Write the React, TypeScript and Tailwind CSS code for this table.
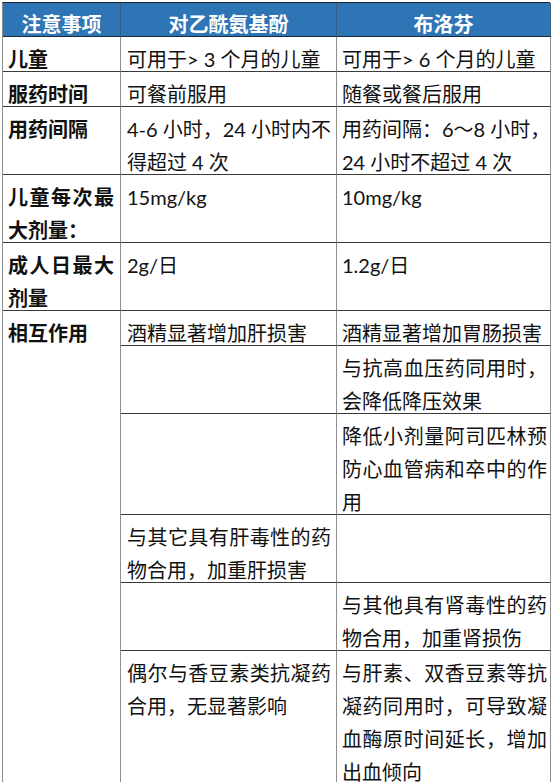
import React from "react";

type Row = {
  label: string[];
  a: string[];
  b: string[];
};

const rows: Row[] = [
  { label: ["儿童"], a: ["可用于> 3 个月的儿童"], b: ["可用于> 6 个月的儿童"] },
  { label: ["服药时间"], a: ["可餐前服用"], b: ["随餐或餐后服用"] },
  {
    label: ["用药间隔"],
    a: ["4-6 小时，24 小时内不", "得超过 4 次"],
    b: ["用药间隔：6～8 小时，", "24 小时不超过 4 次"],
  },
  { label: ["儿童每次最", "大剂量："], a: ["15mg/kg"], b: ["10mg/kg"] },
  { label: ["成人日最大", "剂量"], a: ["2g/日"], b: ["1.2g/日"] },
];

const interactions: [string[], string[]][] = [
  [["酒精显著增加肝损害"], ["酒精显著增加胃肠损害"]],
  [[], ["与抗高血压药同用时，", "会降低降压效果"]],
  [[], ["降低小剂量阿司匹林预", "防心血管病和卒中的作", "用"]],
  [["与其它具有肝毒性的药", "物合用，加重肝损害"], []],
  [[], ["与其他具有肾毒性的药", "物合用，加重肾损伤"]],
  [
    ["偶尔与香豆素类抗凝药", "合用，无显著影响"],
    ["与肝素、双香豆素等抗", "凝药同用时，可导致凝", "血酶原时间延长，增加", "出血倾向"],
  ],
];

// each line keeps a 33px pitch; the taller line box drops the glyphs the way Word does
function Lines({ lines }: { lines: string[] }) {
  return (
    <>
      {lines.map((line, i) => (
        <div
          key={i}
          className={
            i < lines.length - 1
              ? "h-[33px] whitespace-nowrap leading-[42px] [text-align-last:justify] text-justify"
              : "h-[33px] whitespace-nowrap leading-[42px]"
          }
        >
          {line}
        </div>
      ))}
    </>
  );
}

const cell = "border-r border-b border-r-[#8e8e8e] border-b-[#3a3a3a] pt-[1px]";

export default function App() {
  return (
    <div className="min-h-screen bg-white pt-[2px] pl-[2px] font-['Lato','Noto_Sans_CJK_SC',sans-serif] text-[20px] text-[#111]">
      <div className="grid w-[548px] grid-cols-[118px_216px_214px] border-t border-l border-t-[#222] border-l-[#8e8e8e]">
        {["注意事项", "对乙酰氨基酚", "布洛芬"].map((h) => (
          <div
            key={h}
            className="h-[34px] border-r border-b border-r-[#3d5f84] border-b-[#1d2a3a] bg-[#2e75b6] text-center leading-[42px] font-bold text-white"
          >
            {h}
          </div>
        ))}

        {rows.map((r) => (
          <React.Fragment key={r.label.join("")}>
            <div className={`${cell} pr-[6px] pl-[5px] font-bold`}>
              <Lines lines={r.label} />
            </div>
            <div className={`${cell} pr-[5px] pl-[6px]`}>
              <Lines lines={r.a} />
            </div>
            <div className={`${cell} pr-[3px] pl-[5px]`}>
              <Lines lines={r.b} />
            </div>
          </React.Fragment>
        ))}

        <div className={`${cell} row-span-6 pl-[5px] font-bold`}>
          <Lines lines={["相互作用"]} />
        </div>
        {interactions.map(([a, b], i) => (
          <React.Fragment key={i}>
            <div className={`${cell} pr-[5px] pl-[6px]`}>
              <Lines lines={a} />
            </div>
            <div className={`${cell} pr-[3px] pl-[5px]`}>
              <Lines lines={b} />
            </div>
          </React.Fragment>
        ))}
      </div>
    </div>
  );
}
